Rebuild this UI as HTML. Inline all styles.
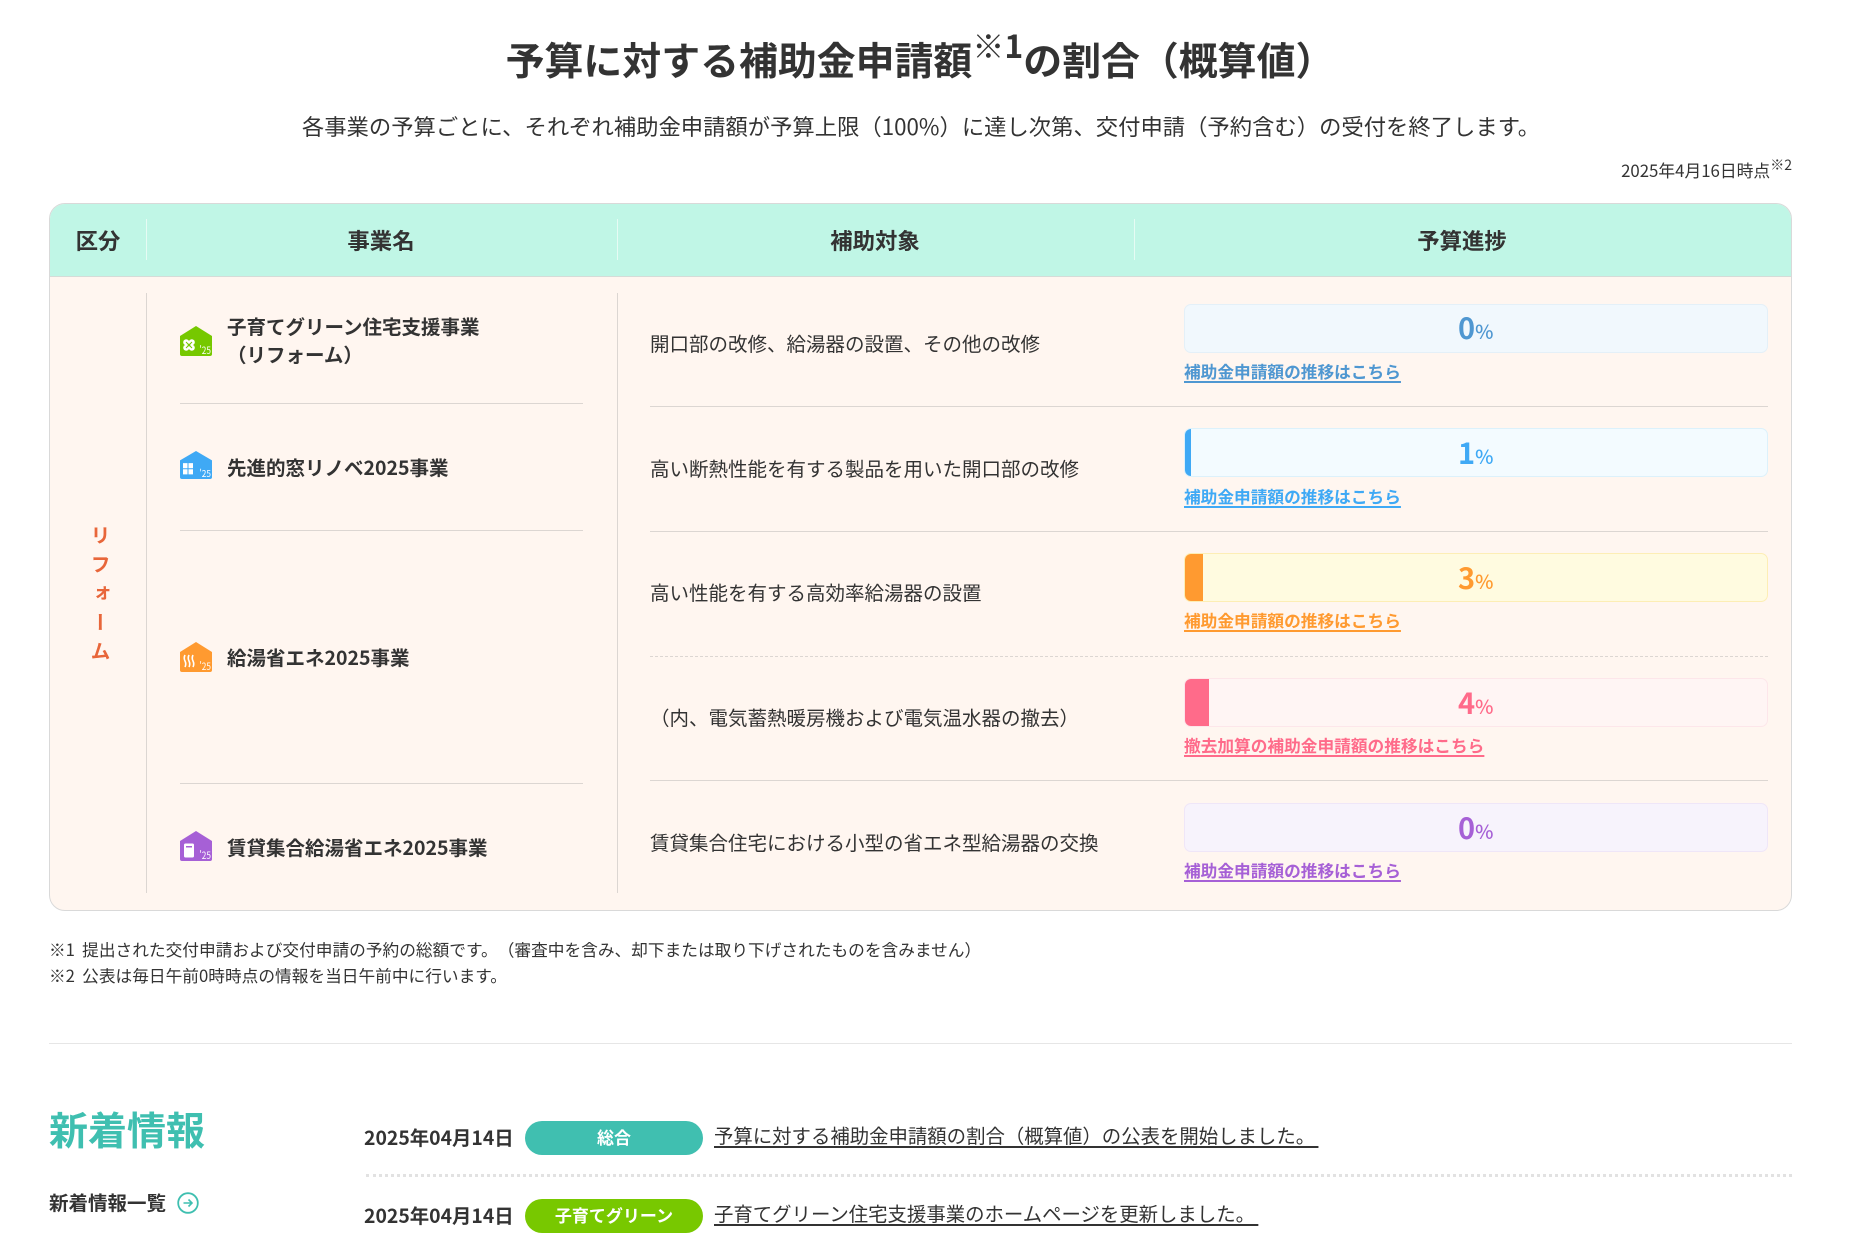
<!DOCTYPE html>
<html lang="ja">
<head>
<meta charset="utf-8">
<title>予算に対する補助金申請額の割合</title>
<style>
html,body{margin:0;padding:0;background:#fff;}
body{width:1857px;height:1238px;position:relative;overflow:hidden;font-family:"Noto Sans CJK JP","Liberation Sans",sans-serif;color:#333;text-spacing-trim:space-all;}
.t{position:absolute;white-space:nowrap;line-height:30px;height:30px;}
.b{font-weight:700;}
.c{transform:translateX(-50%);}
.box{position:absolute;box-sizing:border-box;}
.h{font-size:22.4px;font-weight:700;top:225px;}
.n{font-size:19.5px;font-weight:700;left:227px;}
.d{font-size:19.5px;left:650px;}
.l{font-size:16.7px;font-weight:700;left:1184px;text-decoration:underline;text-underline-offset:3px;text-decoration-thickness:2px;}
.bar{position:absolute;left:1184px;width:584px;height:49px;border:1px solid;border-radius:7px;box-sizing:border-box;overflow:hidden;}
.bar i{position:absolute;left:0;top:0;bottom:0;display:block;}
.p{position:absolute;left:1458px;width:36px;white-space:nowrap;font-weight:700;font-size:29px;line-height:40px;height:40px;}
.p small{font-size:19.500px;font-weight:500;}
.v{position:absolute;background:#dcd6d2;width:1px;top:293px;height:600px;}
.r{position:absolute;height:1px;background:#dcd6d2;}
.ic{position:absolute;left:180px;width:32px;height:30px;}
.date{font-size:19.4px;font-weight:700;left:364px;}
.pill{position:absolute;left:525px;width:178px;height:34px;border-radius:17px;color:#fff;font-weight:700;font-size:17px;line-height:32px;text-align:center;}
.news{font-size:19.4px;left:714px;text-decoration:underline;text-underline-offset:3px;text-decoration-thickness:2px;white-space:pre;word-spacing:-1px;}
</style>
</head>
<body>

<div class="t b c" style="left:920px;top:37px;font-size:38.9px;line-height:44px;height:44px;">予算に対する補助金申請額<span style="font-size:32px;font-weight:400;position:relative;top:-17px;">※<b>1</b></span>の割合（概算値）</div>
<div class="t c" style="left:921px;top:111px;font-size:22.33px;">各事業の予算ごとに、それぞれ補助金申請額が予算上限（100%）に達し次第、交付申請（予約含む）の受付を終了します。</div>
<div class="t" style="right:65px;top:155px;font-size:16.8px;">2025年4月16日時点<span style="font-size:14px;position:relative;top:-7px;">※2</span></div>

<div class="box" style="left:49px;top:203px;width:1743px;height:708px;border:1px solid #d9d9d9;border-radius:16px;background:#fff6f0;overflow:hidden;">
  <div style="position:absolute;left:0;top:0;right:0;height:72px;background:#c0f6e6;border-bottom:1px solid #d5dcd8;"></div>
</div>

<div class="box" style="left:146px;top:219px;width:1px;height:41px;background:#e6fbf4;"></div>
<div class="box" style="left:617px;top:219px;width:1px;height:41px;background:#e6fbf4;"></div>
<div class="box" style="left:1134px;top:219px;width:1px;height:41px;background:#e6fbf4;"></div>

<div class="t h c" style="left:98px;">区分</div>
<div class="t h c" style="left:381px;">事業名</div>
<div class="t h c" style="left:875px;">補助対象</div>
<div class="t h c" style="left:1462px;">予算進捗</div>

<div class="v" style="left:146px;"></div>
<div class="v" style="left:617px;"></div>

<div style="position:absolute;left:86px;top:525px;width:28px;writing-mode:vertical-rl;font-size:20px;font-weight:700;color:#e8663a;letter-spacing:9px;line-height:28px;white-space:nowrap;">リフォーム</div>

<!-- name rules -->
<div class="r" style="left:180px;width:403px;top:403px;"></div>
<div class="r" style="left:180px;width:403px;top:530px;"></div>
<div class="r" style="left:180px;width:403px;top:783px;"></div>

<!-- target rules -->
<div class="r" style="left:650px;width:1118px;top:406px;"></div>
<div class="r" style="left:650px;width:1118px;top:531px;"></div>
<div class="r" style="left:650px;width:1118px;top:656px;height:0;background:none;border-top:1px dashed #dcd6d2;"></div>
<div class="r" style="left:650px;width:1118px;top:780px;"></div>

<!-- icons -->
<svg class="ic" style="top:326px" viewBox="0 0 32 30"><path d="M16 0L32 10V28a2 2 0 0 1-2 2H2a2 2 0 0 1-2-2V10Z" fill="#76c800"/><g fill="#fff"><circle cx="6.200" cy="16.200" r="3"/><circle cx="11.800" cy="16.200" r="3"/><circle cx="6.200" cy="21.800" r="3"/><circle cx="11.800" cy="21.800" r="3"/></g><path d="M6 16l6 6M12 16l-6 6" stroke="#76c800" stroke-width="1"/><text x="19.500" y="28" font-size="10" fill="#fff" textLength="11.500" lengthAdjust="spacingAndGlyphs">'25</text></svg>
<svg class="ic" style="top:451px;height:28px" viewBox="0 0 32 30" preserveAspectRatio="none"><path d="M16 0L32 10V28a2 2 0 0 1-2 2H2a2 2 0 0 1-2-2V10Z" fill="#3fa9f5"/><path d="M3 13h4.500v5.500H3ZM8.500 13H13v5.500H8.500ZM3 19.500h4.500V25H3ZM8.500 19.500H13V25H8.500Z" fill="#fff"/><text x="19.500" y="28" font-size="10" fill="#fff" textLength="11.500" lengthAdjust="spacingAndGlyphs">'25</text></svg>
<svg class="ic" style="top:642px" viewBox="0 0 32 30"><path d="M16 0L32 10V28a2 2 0 0 1-2 2H2a2 2 0 0 1-2-2V10Z" fill="#ff9a30"/><path d="M5 13q-1.500 3 0 6t0 6M9 13q-1.500 3 0 6t0 6M13 13q-1.500 3 0 6t0 6" fill="none" stroke="#fff" stroke-width="1.600"/><text x="19.500" y="28" font-size="10" fill="#fff" textLength="11.500" lengthAdjust="spacingAndGlyphs">'25</text></svg>
<svg class="ic" style="top:831px" viewBox="0 0 32 30"><path d="M16 0L32 10V28a2 2 0 0 1-2 2H2a2 2 0 0 1-2-2V10Z" fill="#a660d6"/><path d="M4 14a1.500 1.500 0 0 1 1.500-1.500h7A1.500 1.500 0 0 1 14 14v11a1.500 1.500 0 0 1-1.500 1.500h-7A1.500 1.500 0 0 1 4 25Z" fill="#fff"/><rect x="6" y="15" width="6" height="1.500" fill="#a660d6"/><text x="19.500" y="28" font-size="10" fill="#fff" textLength="11.500" lengthAdjust="spacingAndGlyphs">'25</text></svg>

<!-- names -->
<div class="t n" style="top:311px;">子育てグリーン住宅支援事業</div>
<div class="t n" style="top:339px;">（リフォーム）</div>
<div class="t n" style="top:452px;">先進的窓リノベ2025事業</div>
<div class="t n" style="top:642px;">給湯省エネ2025事業</div>
<div class="t n" style="top:832px;">賃貸集合給湯省エネ2025事業</div>

<!-- targets -->
<div class="t d" style="top:328px;">開口部の改修、給湯器の設置、その他の改修</div>
<div class="t d" style="top:453px;">高い断熱性能を有する製品を用いた開口部の改修</div>
<div class="t d" style="top:577px;">高い性能を有する高効率給湯器の設置</div>
<div class="t d" style="top:702px;">（内、電気蓄熱暖房機および電気温水器の撤去）</div>
<div class="t d" style="top:827px;">賃貸集合住宅における小型の省エネ型給湯器の交換</div>

<!-- bars -->
<div class="bar" style="top:304px;background:#f1f8fd;border-color:#e4f0f8;"></div>
<div class="p" style="top:307px;color:#4f97d1;">0<small>%</small></div>
<div class="t l" style="top:356px;color:#4f97d1;">補助金申請額の推移はこちら</div>

<div class="bar" style="top:428px;background:#f3fbff;border-color:#dcf1fb;"><i style="width:6px;background:#3fa9f5;"></i></div>
<div class="p" style="top:432px;color:#3fa9f5;">1<small>%</small></div>
<div class="t l" style="top:481px;color:#3fa9f5;">補助金申請額の推移はこちら</div>

<div class="bar" style="top:553px;background:#fffbe0;border-color:#fdeeb5;"><i style="width:18px;background:#ff9a30;"></i></div>
<div class="p" style="top:557px;color:#ff9a30;">3<small>%</small></div>
<div class="t l" style="top:605px;color:#ff9a30;">補助金申請額の推移はこちら</div>

<div class="bar" style="top:678px;background:#fff5f4;border-color:#fde6ea;"><i style="width:24px;background:#ff6b8a;"></i></div>
<div class="p" style="top:682px;color:#ff6b8a;">4<small>%</small></div>
<div class="t l" style="top:730px;color:#ff6b8a;">撤去加算の補助金申請額の推移はこちら</div>

<div class="bar" style="top:803px;background:#f7f3fc;border-color:#efe6f8;"></div>
<div class="p" style="top:807px;color:#a660d6;">0<small>%</small></div>
<div class="t l" style="top:855px;color:#a660d6;">補助金申請額の推移はこちら</div>

<!-- notes -->
<div class="t" style="left:49px;top:934px;font-size:16.7px;word-spacing:3.500px;">※1 提出された交付申請および交付申請の予約の総額です。（審査中を含み、却下または取り下げされたものを含みません）</div>
<div class="t" style="left:49px;top:960px;font-size:16.7px;word-spacing:3.500px;">※2 公表は毎日午前0時時点の情報を当日午前中に行います。</div>

<div class="r" style="left:49px;width:1743px;top:1043px;background:#e6e6e6;"></div>

<!-- news -->
<div class="t b" style="left:49px;top:1104px;font-size:39px;line-height:50px;height:50px;color:#3fbfb0;">新着情報</div>
<div class="t b" style="left:49px;top:1187px;font-size:19.5px;">新着情報一覧</div>
<svg style="position:absolute;left:177px;top:1192px;width:22px;height:22px;" viewBox="0 0 22 22"><circle cx="11" cy="11" r="9.800" fill="none" stroke="#3fbfb0" stroke-width="1.800"/><path d="M6.500 11H15M11.500 7.500L15 11l-3.500 3.500" fill="none" stroke="#3fbfb0" stroke-width="1.600"/></svg>

<div class="t date" style="top:1122px;">2025年04月14日</div>
<div class="pill" style="top:1121px;background:#40bfb0;">総合</div>
<div class="t news" style="top:1120px;">予算に対する補助金申請額の割合（概算値）の公表を開始しました。 </div>

<div style="position:absolute;left:366px;width:1426px;top:1174px;height:0;border-top:3px dotted #e2e2e2;"></div>

<div class="t date" style="top:1200px;">2025年04月14日</div>
<div class="pill" style="top:1199px;background:#78c800;">子育てグリーン</div>
<div class="t news" style="top:1198px;">子育てグリーン住宅支援事業のホームページを更新しました。 </div>

</body>
</html>
